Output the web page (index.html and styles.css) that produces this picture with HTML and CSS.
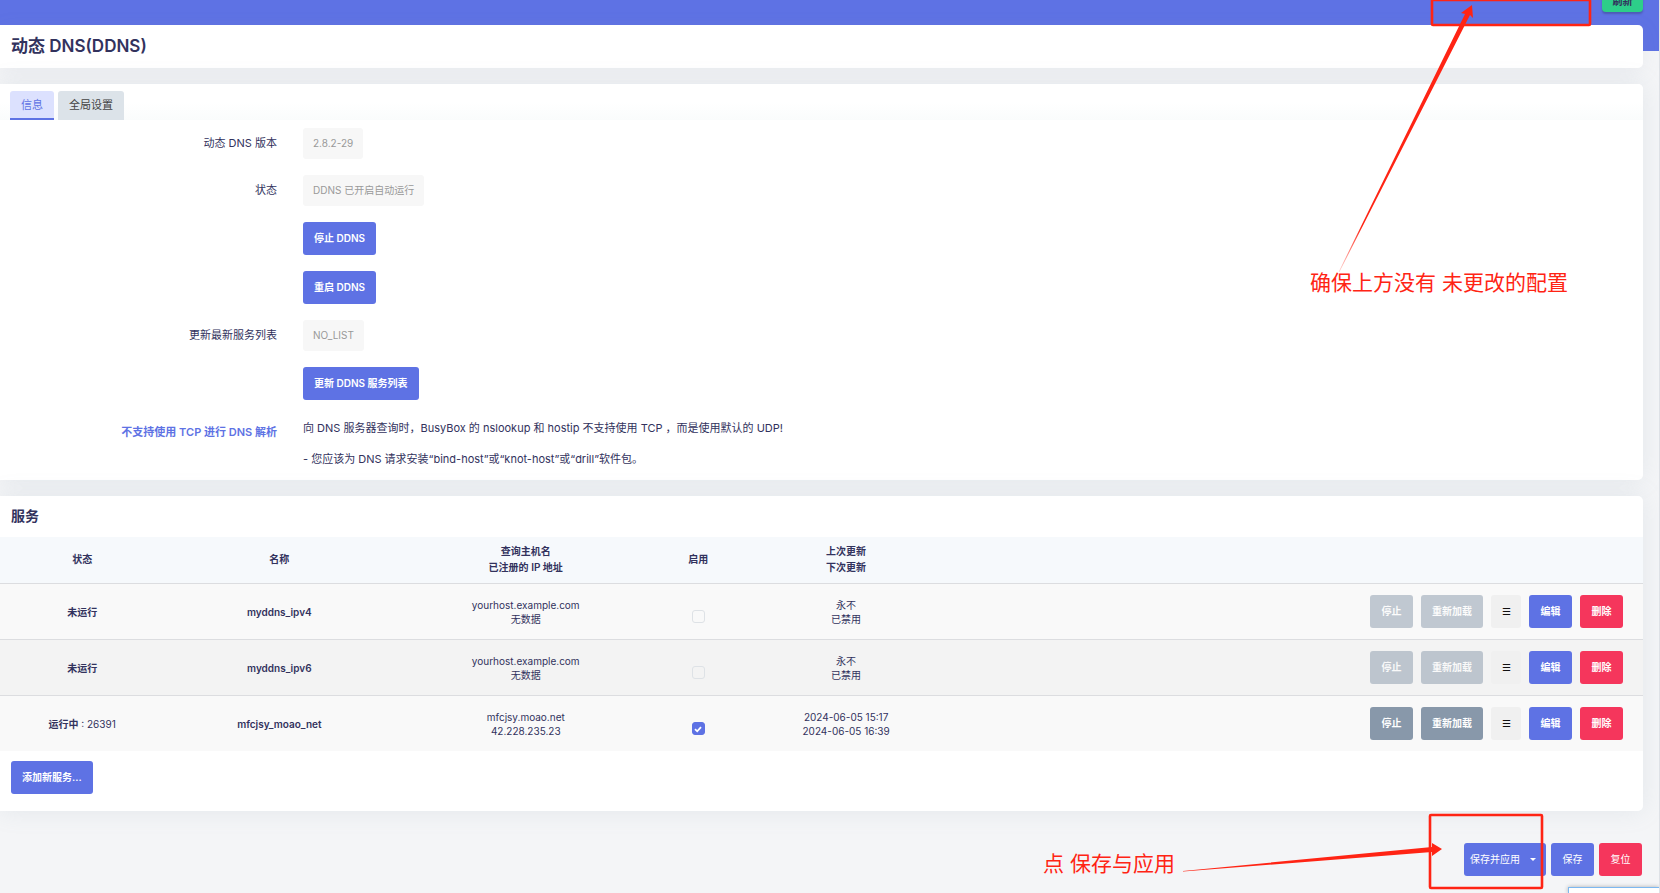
FILE: index.html
```html
<!DOCTYPE html>
<html lang="zh-CN">
<head>
<meta charset="utf-8">
<title>动态 DNS(DDNS)</title>
<link rel="stylesheet" href="styles.css">
</head>
<body>
<div class="page">
  <header class="topbar">
    <button type="button" class="refresh">刷新</button>
  </header>

  <main class="main">
    <section class="card title-card">
      <h1 class="page-title">动态 DNS(DDNS)</h1>
    </section>

    <section class="card info-card">
      <nav class="tabs">
        <a href="#info" class="tab tab-active">信息</a>
        <a href="#global" class="tab">全局设置</a>
      </nav>
      <form class="form" id="info">
        <div class="row">
          <label class="label" for="version">动态 DNS 版本</label>
          <output class="value" id="version">2.8.2-29</output>
        </div>
        <div class="row">
          <label class="label" for="state">状态</label>
          <output class="value" id="state">DDNS 已开启自动运行</output>
        </div>
        <div class="row">
          <span class="label"></span>
          <button type="button" class="btn">停止 DDNS</button>
        </div>
        <div class="row">
          <span class="label"></span>
          <button type="button" class="btn">重启 DDNS</button>
        </div>
        <div class="row">
          <label class="label" for="list">更新最新服务列表</label>
          <output class="value" id="list">NO_LIST</output>
        </div>
        <div class="row">
          <span class="label"></span>
          <button type="button" class="btn">更新 DDNS 服务列表</button>
        </div>
        <div class="row">
          <a href="#tcp" class="label hint">不支持使用 TCP 进行 DNS 解析</a>
          <div class="notes">
            <p class="note">向 DNS 服务器查询时，BusyBox 的 nslookup 和 hostip 不支持使用 TCP ，而是使用默认的 UDP!</p>
            <p class="note">- 您应该为 DNS 请求安装“bind-host”或“knot-host”或“drill”软件包。</p>
          </div>
        </div>
      </form>
    </section>

    <section class="card service-card">
      <h2 class="section-title">服务</h2>
      <table class="services">
        <colgroup>
          <col class="col-state"><col class="col-name"><col class="col-host"><col class="col-enable"><col class="col-time"><col>
        </colgroup>
        <thead>
          <tr>
            <th>状态</th>
            <th>名称</th>
            <th>查询主机名<br>已注册的 IP 地址</th>
            <th>启用</th>
            <th>上次更新<br>下次更新</th>
            <th></th>
          </tr>
        </thead>
        <tbody>
          <tr>
            <td><b>未运行</b></td>
            <td><b>myddns_ipv4</b></td>
            <td>yourhost.example.com<br>无数据</td>
            <td class="enable"><input type="checkbox" class="check" aria-label="启用 myddns_ipv4"></td>
            <td>永不<br>已禁用</td>
            <td><div class="actions">
              <button type="button" class="btn btn-gray" disabled>停止</button>
              <button type="button" class="btn btn-gray" disabled>重新加载</button>
              <button type="button" class="btn btn-drag">☰</button>
              <button type="button" class="btn">编辑</button>
              <button type="button" class="btn btn-red">删除</button>
            </div></td>
          </tr>
          <tr>
            <td><b>未运行</b></td>
            <td><b>myddns_ipv6</b></td>
            <td>yourhost.example.com<br>无数据</td>
            <td class="enable"><input type="checkbox" class="check" aria-label="启用 myddns_ipv6"></td>
            <td>永不<br>已禁用</td>
            <td><div class="actions">
              <button type="button" class="btn btn-gray" disabled>停止</button>
              <button type="button" class="btn btn-gray" disabled>重新加载</button>
              <button type="button" class="btn btn-drag">☰</button>
              <button type="button" class="btn">编辑</button>
              <button type="button" class="btn btn-red">删除</button>
            </div></td>
          </tr>
          <tr>
            <td><b>运行中</b> : 26391</td>
            <td><b>mfcjsy_moao_net</b></td>
            <td>mfcjsy.moao.net<br>42.228.235.23</td>
            <td class="enable"><input type="checkbox" class="check" aria-label="启用 mfcjsy_moao_net" checked></td>
            <td>2024-06-05 15:17<br>2024-06-05 16:39</td>
            <td><div class="actions">
              <button type="button" class="btn btn-gray">停止</button>
              <button type="button" class="btn btn-gray">重新加载</button>
              <button type="button" class="btn btn-drag">☰</button>
              <button type="button" class="btn">编辑</button>
              <button type="button" class="btn btn-red">删除</button>
            </div></td>
          </tr>
        </tbody>
      </table>
      <div class="add-row">
        <button type="button" class="btn">添加新服务...</button>
      </div>
    </section>

    <div class="page-actions">
      <button type="button" class="btn btn-plain btn-apply">保存并应用<span class="caret"></span></button>
      <button type="button" class="btn btn-plain">保存</button>
      <button type="button" class="btn btn-plain btn-red">复位</button>
    </div>
  </main>

  <svg class="marks marks-top" width="360" height="280" viewBox="-1 0 360 280" aria-hidden="true">
    <defs>
      <linearGradient id="fade" gradientUnits="userSpaceOnUse" x1="39" y1="272" x2="62" y2="226">
        <stop offset="0" stop-color="#ff2414" stop-opacity=".2"/>
        <stop offset="1" stop-color="#ff2414"/>
      </linearGradient>
    </defs>
    <rect x="132" y="0" width="158" height="25" rx="1" fill="none" stroke="#ff2414" stroke-width="2.6"/>
    <path d="M38.6 272 L165 14 L161 13 L172 5 L173 18 L170 15 L39.4 272 Z" fill="url(#fade)"/>
  </svg>
  <p class="mark-text mark-text-top">确保上方没有 未更改的配置</p>

  <svg class="marks marks-bottom" width="480" height="90" viewBox="0 -1 480 90" aria-hidden="true">
    <rect x="251" y="11" width="112" height="73" rx="1" fill="none" stroke="#ff2414" stroke-width="2.6"/>
    <path d="M4 67 L253 43 L253 39 L263 45 L253 52 L253 48 L4 67.6 Z" fill="#ff2414"/>
  </svg>
  <p class="mark-text mark-text-bottom">点 保存与应用</p>

  <div class="popup"></div>
</div>
</body>
</html>
```

FILE: styles.css
```css
* { box-sizing: border-box; }

body {
  margin: 0;
  background: #f4f5f7;
  color: #32325d;
  font-family: Inter, "Noto Sans CJK SC", sans-serif;
  font-size: 11px;
}

h1, h2, p { margin: 0; }

.page {
  position: relative;
  min-height: 100vh;
  overflow: hidden;
  border-right: 1px solid #dee1e6;
}

.topbar {
  display: flex;
  justify-content: flex-end;
  align-items: flex-end;
  height: 51px;
  padding: 0 16px 39px 0;
  overflow: hidden;
  background: #5e72e4;
}

.refresh {
  flex: none;
  min-width: 41px;
  height: 22px;
  padding: 0 10px;
  border: 0;
  border-radius: 4px;
  background: #2dce89;
  box-shadow: 0 2px 2px rgba(50, 50, 93, .35);
  color: #32325d;
  font: 600 10px/22px Inter, "Noto Sans CJK SC", sans-serif;
}

.main {
  display: flex;
  flex-direction: column;
  gap: 16px;
  margin-top: -26px;
  padding-right: 16px;
}

.card {
  background: #fff;
  border-radius: 0 5px 5px 0;
  box-shadow: 0 0 24px rgba(136, 152, 170, .15);
}

.title-card { padding: 8px 11px; box-shadow: 0 4px 20px rgba(136, 152, 170, .1); }

.page-title { font-size: 17px; font-weight: 600; line-height: 27px; }

.tabs {
  display: flex;
  gap: 4px;
  padding: 7px 10px 0;
  background: linear-gradient(#fff 50%, #fafcfc);
  border-radius: 0 5px 0 0;
}

.tab {
  height: 29px;
  padding: 0 11px;
  border-radius: 3px 3px 0 0;
  background: #dce3e9;
  color: #444;
  line-height: 28px;
  text-decoration: none;
}

.tab-active {
  background: #dce1fe;
  border-bottom: 2px solid #5e72e4;
  color: #5e72e4;
}

.form {
  display: flex;
  flex-direction: column;
  gap: 16px;
  padding: 8px 0 9px;
}

.row { display: flex; align-items: flex-start; gap: 26px; }

.label { width: 277px; line-height: 31px; text-align: right; }

.hint { color: #5e72e4; font-weight: 600; line-height: 33px; text-decoration: none; }

.value {
  padding: 0 10px;
  border-radius: 3px;
  background: #f7f7f7;
  color: #999;
  font-size: 10px;
  line-height: 31px;
}

.notes { display: flex; flex-direction: column; gap: 7px; }

.note { line-height: 24px; }

.btn {
  height: 33px;
  padding: 0 11px;
  border: 0;
  border-radius: 3px;
  background: #5e72e4;
  color: #fff;
  font: 600 10px/33px Inter, "Noto Sans CJK SC", sans-serif;
  white-space: nowrap;
}

.btn-gray { background: #8898aa; }
.btn-gray:disabled { opacity: .5; }
.btn-red { background: #f5365c; }
.btn-plain { font-weight: 400; }

.section-title { padding: 7px 11px 9px; font-size: 14px; font-weight: 600; line-height: 25px; }

.services {
  width: 100%;
  table-layout: fixed;
  border-collapse: separate;
  border-spacing: 0;
  text-align: center;
  font-size: 10px;
}

.col-state { width: 10%; }
.col-name { width: 14%; }
.col-host { width: 16%; }
.col-enable { width: 5%; }
.col-time { width: 13%; }

.services th {
  height: 46px;
  padding: 0 0 2px;
  background: #f6f9fc;
  font-weight: 600;
  line-height: 16px;
}

.services td {
  height: 56px;
  padding: 0;
  border-top: 1px solid #dcdde0;
  background: #f9f9f9;
  line-height: 14px;
}

.services tr:nth-child(even) td { background: #f3f3f3; }

.services b { font-weight: 600; }

.services .enable { padding-top: 10px; }

.check {
  appearance: none;
  display: block;
  width: 13px;
  height: 13px;
  margin: 0 auto;
  border: 1px solid #dee2e6;
  border-radius: 3px;
}

.check:checked {
  border-color: #5e72e4;
  background: #5e72e4 url("data:image/svg+xml,%3Csvg xmlns='http://www.w3.org/2000/svg' viewBox='0 0 8 8'%3E%3Cpath d='M1 4.2 3.2 6.3 7 2.2' fill='none' stroke='white' stroke-width='1.8'/%3E%3C/svg%3E") center / 8px no-repeat;
}

.actions { display: flex; justify-content: flex-end; gap: 8px; padding-right: 20px; }

.actions .btn,
.page-actions .btn { min-width: 43px; }

.actions .btn-drag {
  min-width: 30px;
  padding: 0 10px;
  background: #f0f0f0;
  color: #111;
  font-weight: 400;
}

.add-row { padding: 10px 11px 17px; }

.page-actions { display: flex; justify-content: flex-end; gap: 5px; padding: 16px 1px 17px 0; }

.btn-apply { display: flex; align-items: center; gap: 10px; padding: 0 10px 0 6px; }

.caret {
  border: 3px solid transparent;
  border-top-color: #fff;
  border-bottom: 0;
}

.marks { position: absolute; pointer-events: none; }
.marks-top { top: 0; right: 0; }
.marks-bottom { right: 0; bottom: 0; }

.mark-text {
  position: absolute;
  color: #ff2414;
  font-size: 21px;
  line-height: 26px;
  white-space: nowrap;
}

.mark-text-top { top: 270px; right: 91px; }
.mark-text-bottom { right: 484px; bottom: 16px; }

.popup {
  position: absolute;
  right: 0;
  bottom: 0;
  width: 91px;
  height: 6px;
  border: solid #7db8f0;
  border-width: 1px 0 0 1px;
  background: #fff;
  box-shadow: 0 0 4px rgba(0, 0, 0, .3);
}
```
